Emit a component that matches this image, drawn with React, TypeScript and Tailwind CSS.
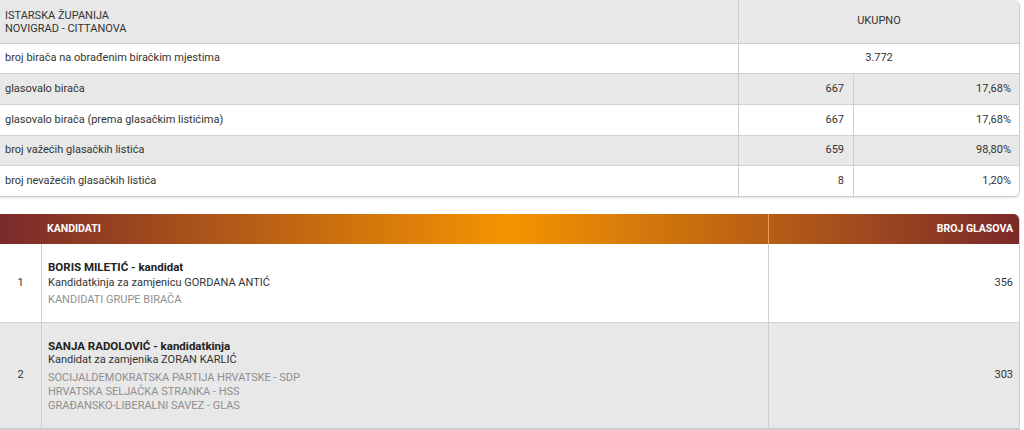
export default function App() {
  const stats = [
    { label: "broj birača na obrađenim biračkim mjestima", total: "3.772", h: "h-[30px]", bg: "bg-white" },
    { label: "glasovalo birača", n: "667", p: "17,68%", h: "h-[31px]", bg: "bg-[#e8e8e8]" },
    { label: "glasovalo birača (prema glasačkim listićima)", n: "667", p: "17,68%", h: "h-[31px]", bg: "bg-white" },
    { label: "broj važećih glasačkih listića", n: "659", p: "98,80%", h: "h-[30px]", bg: "bg-[#e8e8e8]" },
    { label: "broj nevažećih glasačkih listića", n: "8", p: "1,20%", h: "h-[31px]", bg: "bg-white" },
  ];

  return (
    <div className="w-[1024px] h-[430px] bg-white text-[11px] text-[#333] overflow-hidden" style={{ fontFamily: "Roboto, 'Liberation Sans', sans-serif" }}>
      {/* summary table */}
      <div className="w-[1020px] border-r border-b border-[#cfcfcf] rounded-tr-md rounded-br-md overflow-hidden shadow-[0_1px_2px_rgba(0,0,0,0.12)]">
        <div className="grid grid-cols-[738px_1fr] h-[43px] bg-[#e8e8e8]">
          <div className="flex flex-col justify-center pl-[5px] leading-[13px]">
            <span>ISTARSKA ŽUPANIJA</span>
            <span>NOVIGRAD - CITTANOVA</span>
          </div>
          <div className="flex items-center justify-center border-l border-[#cfcfcf]">UKUPNO</div>
        </div>
        {stats.map((r) => (
          <div key={r.label} className={`grid grid-cols-[738px_115px_1fr] border-t border-[#cfcfcf] ${r.h} ${r.bg}`}>
            <div className="flex items-center pl-[5px]">{r.label}</div>
            {r.total ? (
              <div className="col-span-2 flex items-center justify-center border-l border-[#cfcfcf]">{r.total}</div>
            ) : (
              <>
                <div className="flex items-center justify-end pr-[9px] border-l border-[#cfcfcf]">{r.n}</div>
                <div className="flex items-center justify-end pr-[8px] border-l border-[#cfcfcf]">{r.p}</div>
              </>
            )}
          </div>
        ))}
      </div>

      {/* candidates table */}
      <div className="mt-[17px] w-[1020px] rounded-tr-md overflow-hidden border-r border-b-2 border-[#cfcfcf]">
        <div className="grid grid-cols-[41px_727px_1fr] h-[30px] bg-[linear-gradient(90deg,#7a292b_0%,#f59400_50%,#7a292b_100%)] text-white font-bold text-[10.5px]">
          <div />
          <div className="flex items-center pl-[6px]">KANDIDATI</div>
          <div className="flex items-center justify-end pr-[6px] border-l border-[#e8a050]">BROJ GLASOVA</div>
        </div>
        <div className="grid grid-cols-[41px_727px_1fr] h-[78px] bg-white">
          <div className="flex items-center justify-center">1</div>
          <div className="flex flex-col justify-center pl-[6px] border-l border-[#cfcfcf] leading-[15px]">
            <span className="font-bold text-[11.5px] text-[#222]">BORIS MILETIĆ - kandidat</span>
            <span>Kandidatkinja za zamjenicu GORDANA ANTIĆ</span>
            <span className="mt-[2px] text-[#8f8f8f]">KANDIDATI GRUPE BIRAČA</span>
          </div>
          <div className="flex items-center justify-end pr-[6px] border-l border-[#cfcfcf]">356</div>
        </div>
        <div className="grid grid-cols-[41px_727px_1fr] h-[106px] bg-[#e8e8e8] border-t border-[#cfcfcf]">
          <div className="flex items-center justify-center">2</div>
          <div className="flex flex-col justify-center pl-[6px] border-l border-[#cfcfcf] leading-[14px]">
            <span className="font-bold text-[11.5px] text-[#222]">SANJA RADOLOVIĆ - kandidatkinja</span>
            <span>Kandidat za zamjenika ZORAN KARLIĆ</span>
            <span className="mt-[4px] text-[#8f8f8f]">SOCIJALDEMOKRATSKA PARTIJA HRVATSKE - SDP</span>
            <span className="text-[#8f8f8f]">HRVATSKA SELJAČKA STRANKA - HSS</span>
            <span className="text-[#8f8f8f]">GRAĐANSKO-LIBERALNI SAVEZ - GLAS</span>
          </div>
          <div className="flex items-center justify-end pr-[6px] border-l border-[#cfcfcf]">303</div>
        </div>
      </div>
    </div>
  );
}
